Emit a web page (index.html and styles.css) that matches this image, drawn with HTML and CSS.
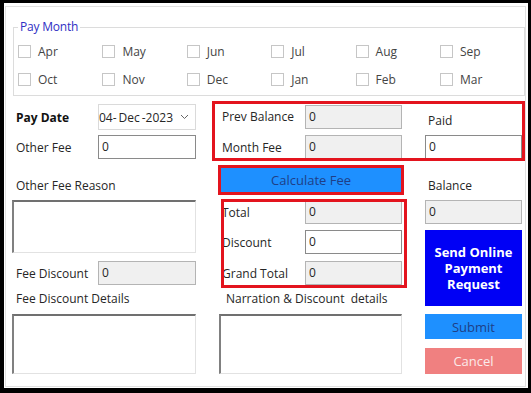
FILE: index.html
```html
<!DOCTYPE html>
<html lang="en">
  <head>
    <meta charset="UTF-8" />
    <meta name="viewport" content="width=device-width, initial-scale=1.0" />
    <title>Fee Payment</title>
    <link rel="stylesheet" href="styles.css">
  </head>
  <body>
    <div class="window">
      <div class="form">
        <fieldset class="months">
          <legend>Pay Month</legend>
          <div class="month-grid">
            <label class="month"><span class="box"></span>Apr</label>
            <label class="month"><span class="box"></span>May</label>
            <label class="month"><span class="box"></span>Jun</label>
            <label class="month"><span class="box"></span>Jul</label>
            <label class="month"><span class="box"></span>Aug</label>
            <label class="month"><span class="box"></span>Sep</label>
            <label class="month"><span class="box"></span>Oct</label>
            <label class="month"><span class="box"></span>Nov</label>
            <label class="month"><span class="box"></span>Dec</label>
            <label class="month"><span class="box"></span>Jan</label>
            <label class="month"><span class="box"></span>Feb</label>
            <label class="month"><span class="box"></span>Mar</label>
          </div>
        </fieldset>

        <div class="lower">
          <!-- left column -->
          <div class="col col-a">
            <div class="row row-date">
              <span class="lbl bold">Pay Date</span>
              <div class="datepick">
                <span class="date-text">04-&thinsp;Dec&thinsp;-2023</span>
                <svg class="chev" width="9" height="6" viewBox="0 0 9 6"><polyline points="1,1 4.5,4.5 8,1" fill="none" stroke="#666" stroke-width="1"/></svg>
              </div>
            </div>
            <div class="row row-other">
              <span class="lbl">Other Fee</span>
              <div class="field">0</div>
            </div>
            <div class="caption cap-reason">Other Fee Reason</div>
            <div class="memo memo-reason"></div>
            <div class="row row-feedisc">
              <span class="lbl">Fee Discount</span>
              <div class="field readonly">0</div>
            </div>
            <div class="caption cap-details">Fee Discount Details</div>
            <div class="memo memo-details"></div>
          </div>

          <!-- middle column -->
          <div class="col col-b">
            <div class="row row-prev">
              <span class="lbl">Prev Balance</span>
              <div class="field readonly">0</div>
            </div>
            <div class="row row-month">
              <span class="lbl">Month Fee</span>
              <div class="field readonly">0</div>
            </div>
            <button class="btn btn-calc">Calculate Fee</button>
            <div class="row row-total">
              <span class="lbl">Total</span>
              <div class="field readonly">0</div>
            </div>
            <div class="row row-disc">
              <span class="lbl">Discount</span>
              <div class="field">0</div>
            </div>
            <div class="row row-grand">
              <span class="lbl">Grand Total</span>
              <div class="field readonly">0</div>
            </div>
            <div class="caption cap-narration">Narration &amp; Discount&nbsp; details</div>
            <div class="memo memo-narration"></div>
          </div>

          <!-- right column -->
          <div class="col col-c">
            <div class="caption cap-paid">Paid</div>
            <div class="field field-paid">0</div>
            <div class="caption cap-balance">Balance</div>
            <div class="field readonly field-balance">0</div>
            <button class="btn btn-send">Send Online Payment Request</button>
            <button class="btn btn-submit">Submit</button>
            <button class="btn btn-cancel">Cancel</button>
          </div>

          <!-- red highlight boxes -->
          <div class="mark mark-top"></div>
          <div class="mark mark-calc"></div>
          <div class="mark mark-total"></div>
        </div>
      </div>
    </div>
  </body>
</html>
```

FILE: styles.css
```css
body {
  margin: 0;
  background: #000;
  font-family: "Open Sans", "Noto Sans", sans-serif;
  font-size: 12px;
  color: #262626;
}
.window {
  margin: 3px 3px 5px 4px;
  width: 524px;
  height: 385px;
  background: #fff;
  padding: 3px 2px 1px 1px;
  box-sizing: border-box;
}
.form {
  height: 100%;
  border: 1px solid #e1e1e1;
  box-sizing: border-box;
}

/* pay month group */
.months {
  margin: 12px 0 0 7px;
  width: 511px;
  height: 77px;
  box-sizing: border-box;
  border: 1px solid #dcdcdc;
  padding: 0 0 0 4px;
}
.months legend {
  margin-left: 0;
  padding: 0 2px;
  line-height: 16px;
  color: #2f2fc4;
  letter-spacing: -0.2px;
}
.month-grid {
  display: grid;
  grid-template-columns: repeat(6, 84.4px);
  grid-auto-rows: 20px;
  row-gap: 8px;
  margin-top: 6px;
}
.month {
  display: flex;
  align-items: center;
  gap: 7px;
  color: #444;
}
.box {
  width: 11px;
  height: 11px;
  border: 1px solid #c6c6c6;
  background: #fff;
}

/* lower area */
.lower {
  position: relative;
  display: flex;
  gap: 23px;
  margin-top: 8px;
  padding-left: 6px;
}
.col {
  display: flex;
  flex-direction: column;
}
.col-a { width: 184px; }
.col-b { width: 183px; }
.col-c { width: 97px; }

.row {
  display: flex;
  align-items: center;
  height: 24px;
}
.lbl {
  flex: 0 0 auto;
  padding-left: 4px;
}
.col-a .lbl { width: 82px; }
.col-b .lbl { width: 83px; padding-left: 3px; }
.bold { font-weight: 700; color: #111; }

.field {
  height: 24px;
  box-sizing: border-box;
  border: 1px solid #8a8a8a;
  background: #fff;
  padding-left: 3px;
  line-height: 21px;
  flex: 1;
}
.readonly {
  background: #f0f0f0;
  border-color: #b4b4b4;
}
.datepick {
  flex: 1;
  height: 26px;
  box-sizing: border-box;
  border: 1px solid #dadada;
  display: flex;
  align-items: center;
  justify-content: space-between;
  overflow: hidden;
  padding-right: 6px;
}
.date-text { margin-left: 0; }

.caption {
  height: 16px;
  line-height: 16px;
  padding-left: 4px;
}
.memo {
  box-sizing: border-box;
  border-top: 2px solid #707070;
  border-left: 2px solid #808080;
  border-right: 1px solid #e2e2e2;
  border-bottom: 1px solid #e2e2e2;
  background: #fff;
}

/* column a spacing */
.row-date { height: 26px; }
.row-other { margin-top: 5px; }
.cap-reason { margin-top: 19px; }
.memo-reason { margin-top: 6px; height: 53px; }
.row-feedisc { margin-top: 8px; }
.cap-details { margin-top: 6px; }
.memo-details { margin-top: 7px; height: 60px; }

/* column b spacing */
.row-prev { height: 25px; }
.row-month { margin-top: 6px; }
.btn-calc { margin: 9px 0 0 2px; width: 180px; height: 24px; }
.row-total { margin-top: 8px; }
.row-disc { margin-top: 6px; }
.row-grand { margin-top: 7px; }
.cap-narration { margin-top: 6px; padding-left: 7px; }
.memo-narration { margin-top: 7px; height: 60px; }

/* column c spacing */
.cap-paid { margin-top: 9px; padding-left: 3px; }
.field-paid { margin-top: 6px; flex: none; }
.cap-balance { margin-top: 19px; padding-left: 3px; }
.field-balance { margin-top: 6px; flex: none; }

.btn {
  border: none;
  font-family: inherit;
  font-size: 13px;
  padding: 0;
  cursor: pointer;
}
.btn-calc, .btn-submit {
  background: #1e90ff;
  color: #1f3f86;
}
.btn-send {
  margin-top: 6px;
  height: 76px;
  background: #0000f5;
  color: #fff;
  font-weight: 700;
  line-height: 16px;
  padding: 0 8px;
}
.btn-submit { margin-top: 8px; height: 25px; }
.btn-cancel {
  margin-top: 9px;
  height: 26px;
  background: #f08080;
  color: #fbeaea;
}

/* red highlight boxes */
.mark {
  position: absolute;
  border: 3px solid #e3141e;
  box-sizing: border-box;
}
.mark-top { left: 206px; top: -3px; width: 313px; height: 60px; }
.mark-calc { left: 212px; top: 61px; width: 186px; height: 30px; }
.mark-total { left: 215px; top: 95px; width: 186px; height: 89px; }
```
